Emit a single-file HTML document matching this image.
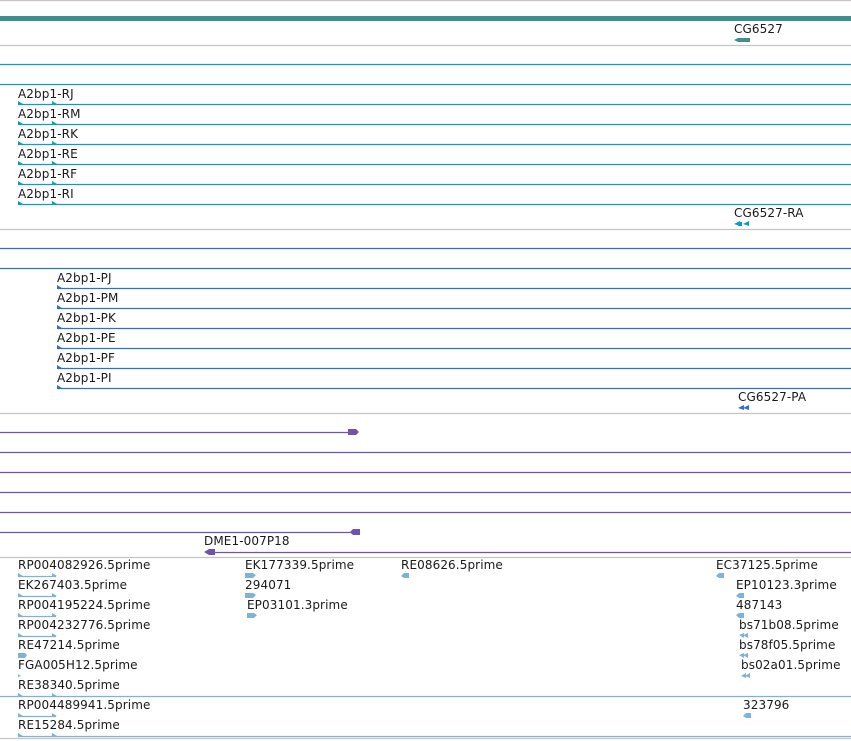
<!DOCTYPE html>
<html><head><meta charset="utf-8"><style>
html,body{margin:0;padding:0;background:#fff;width:851px;height:741px;overflow:hidden}
svg{display:block}
text{font-family:"DejaVu Sans","Liberation Sans",sans-serif;font-size:12px;letter-spacing:0.1px;fill:#1a1a1a}
</style></head><body>
<svg width="851" height="741" viewBox="0 0 851 741" xmlns="http://www.w3.org/2000/svg">
<g stroke="#c4c4c4" stroke-width="1.2">
<line x1="0" y1="0.5" x2="851" y2="0.5"/>
<line x1="0" y1="45.5" x2="851" y2="45.5"/>
<line x1="0" y1="229.5" x2="851" y2="229.5"/>
<line x1="0" y1="413.5" x2="851" y2="413.5"/>
<line x1="0" y1="557.5" x2="851" y2="557.5"/>
<line x1="0" y1="738.5" x2="851" y2="738.5"/>
</g>
<rect x="0" y="16" width="851" height="5" fill="#3f8f90"/>
<text x="734" y="33">CG6527</text>
<polygon points="734,40 738,38 750,38 750,42 738,42" fill="#3f8f90"/>

<g stroke="#0b9dc6" stroke-width="1.2">
<line x1="0" y1="64.5" x2="851" y2="64.5"/>
<line x1="0" y1="84.5" x2="851" y2="84.5"/>
<line x1="18" y1="104.5" x2="851" y2="104.5"/>
<line x1="18" y1="124.5" x2="851" y2="124.5"/>
<line x1="18" y1="144.5" x2="851" y2="144.5"/>
<line x1="18" y1="164.5" x2="851" y2="164.5"/>
<line x1="18" y1="184.5" x2="851" y2="184.5"/>
<line x1="18" y1="204.5" x2="851" y2="204.5"/>
</g>
<g fill="#0b9dc6">
<polygon points="18,101 23,104 18,104"/><polygon points="52,101 57,104 52,104"/>
<polygon points="18,121 23,124 18,124"/><polygon points="52,121 57,124 52,124"/>
<polygon points="18,141 23,144 18,144"/><polygon points="52,141 57,144 52,144"/>
<polygon points="18,161 23,164 18,164"/><polygon points="52,161 57,164 52,164"/>
<polygon points="18,181 23,184 18,184"/><polygon points="52,181 57,184 52,184"/>
<polygon points="18,201 23,204 18,204"/><polygon points="52,201 57,204 52,204"/>
<polygon points="734,224 740,221 740,226" /><rect x="738" y="222" width="4" height="4"/><polygon points="743,224 749,221 749,226"/>
</g>
<text x="18" y="98">A2bp1-RJ</text>
<text x="18" y="118">A2bp1-RM</text>
<text x="18" y="138">A2bp1-RK</text>
<text x="18" y="158">A2bp1-RE</text>
<text x="18" y="178">A2bp1-RF</text>
<text x="18" y="198">A2bp1-RI</text>
<text x="734" y="217">CG6527-RA</text>

<g stroke="#2f6fd2" stroke-width="1.2">
<line x1="0" y1="248.5" x2="851" y2="248.5"/>
<line x1="0" y1="268.5" x2="851" y2="268.5"/>
<line x1="57" y1="288.5" x2="851" y2="288.5"/>
<line x1="57" y1="308.5" x2="851" y2="308.5"/>
<line x1="57" y1="328.5" x2="851" y2="328.5"/>
<line x1="57" y1="348.5" x2="851" y2="348.5"/>
<line x1="57" y1="368.5" x2="851" y2="368.5"/>
<line x1="57" y1="388.5" x2="851" y2="388.5"/>
</g>
<g fill="#2f6fd2">
<polygon points="57,285 62,288 57,288"/><polygon points="57,305 62,308 57,308"/>
<polygon points="57,325 62,328 57,328"/><polygon points="57,345 62,348 57,348"/>
<polygon points="57,365 62,368 57,368"/><polygon points="57,385 62,388 57,388"/>
<polygon points="738,408 744,405 744,410"/><polygon points="743,408 749,405 749,410"/>
</g>
<text x="57" y="282">A2bp1-PJ</text>
<text x="57" y="302">A2bp1-PM</text>
<text x="57" y="322">A2bp1-PK</text>
<text x="57" y="342">A2bp1-PE</text>
<text x="57" y="362">A2bp1-PF</text>
<text x="57" y="382">A2bp1-PI</text>
<text x="738" y="401">CG6527-PA</text>

<g stroke="#7153ad" stroke-width="1.2">
<line x1="0" y1="432.5" x2="350" y2="432.5"/>
<line x1="0" y1="452.5" x2="851" y2="452.5"/>
<line x1="0" y1="472.5" x2="851" y2="472.5"/>
<line x1="0" y1="492.5" x2="851" y2="492.5"/>
<line x1="0" y1="512.5" x2="851" y2="512.5"/>
<line x1="0" y1="532.5" x2="352" y2="532.5"/>
<line x1="208" y1="552.5" x2="851" y2="552.5"/>
</g>
<g fill="#7153ad">
<polygon points="348,429 356,429 359,432 356,435 348,435"/>
<polygon points="350,532 353,529 360,529 360,535 353,535"/>
<polygon points="204,552 209,549 215,549 215,555 209,555"/>
</g>
<text x="204" y="545">DME1-007P18</text>

<g stroke="#7fb2da" stroke-width="1.2">
<line x1="18" y1="576.5" x2="56" y2="576.5"/>
<line x1="18" y1="596.5" x2="56" y2="596.5"/>
<line x1="18" y1="616.5" x2="56" y2="616.5"/>
<line x1="18" y1="636.5" x2="56" y2="636.5"/>
<line x1="0" y1="696.5" x2="851" y2="696.5"/>
<line x1="18" y1="716.5" x2="56" y2="716.5"/>
<line x1="18" y1="736.5" x2="851" y2="736.5"/>
</g>
<g fill="#7fb2da">
<polygon points="18,573 23,576 18,576"/><polygon points="52,573 57,576 52,576"/>
<polygon points="18,593 23,596 18,596"/><polygon points="52,593 57,596 52,596"/>
<polygon points="18,613 23,616 18,616"/><polygon points="52,613 57,616 52,616"/>
<polygon points="18,633 23,636 18,636"/><polygon points="52,633 57,636 52,636"/>
<polygon points="18,653 25,653 27,655 25,658 18,658"/>
<polygon points="18,674 21,676 18,677"/>
<polygon points="18,693 23,696 18,696"/><polygon points="52,693 57,696 52,696"/>
<polygon points="18,713 23,716 18,716"/><polygon points="52,713 57,716 52,716"/>
<polygon points="18,733 23,736 18,736"/><polygon points="52,733 57,736 52,736"/>
<polygon points="245,573 253,573 256,575 253,578 245,578"/>
<polygon points="245,593 253,593 256,595 253,598 245,598"/>
<polygon points="247,613 254,613 257,615 254,618 247,618"/>
<polygon points="401,576 404,573 409,573 409,578 404,578"/>
<polygon points="716,576 719,573 724,573 724,578 719,578"/>
<polygon points="736,596 739,593 744,593 744,598 739,598"/>
<polygon points="736,615 739,613 744,613 744,618 739,618"/>
<polygon points="739,635 744,633 744,638"/><polygon points="743,635 748,633 748,638"/>
<polygon points="739,655 744,653 744,658"/><polygon points="743,655 748,653 748,658"/>
<polygon points="741,676 746,673 746,678"/><polygon points="745,676 750,673 750,678"/>
<polygon points="743,716 746,713 751,713 751,718 746,718"/>
</g>
<text x="18" y="569">RP004082926.5prime</text>
<text x="18" y="589">EK267403.5prime</text>
<text x="18" y="609">RP004195224.5prime</text>
<text x="18" y="629">RP004232776.5prime</text>
<text x="18" y="649">RE47214.5prime</text>
<text x="18" y="669">FGA005H12.5prime</text>
<text x="18" y="689">RE38340.5prime</text>
<text x="18" y="709">RP004489941.5prime</text>
<text x="18" y="729">RE15284.5prime</text>
<text x="245" y="569">EK177339.5prime</text>
<text x="245" y="589">294071</text>
<text x="247" y="609">EP03101.3prime</text>
<text x="401" y="569">RE08626.5prime</text>
<text x="716" y="569">EC37125.5prime</text>
<text x="736" y="589">EP10123.3prime</text>
<text x="736" y="609">487143</text>
<text x="739" y="629">bs71b08.5prime</text>
<text x="739" y="649">bs78f05.5prime</text>
<text x="741" y="669">bs02a01.5prime</text>
<text x="743" y="709">323796</text>
</svg>
</body></html>
